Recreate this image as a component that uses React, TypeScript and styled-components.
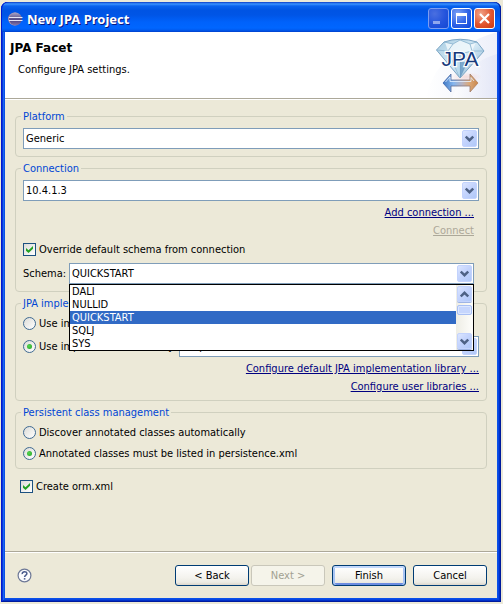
import React, { useId, useState } from "react";
import styled, { createGlobalStyle, css } from "styled-components";

const face = "#ece9d8";
const uiFont = '"DejaVu Sans Condensed", "Noto Sans", sans-serif';

const GlobalStyle = createGlobalStyle`
  *, *::before, *::after { box-sizing: border-box; }
  body {
    margin: 0;
    background: ${face};
    color: #000;
    font: 11px/13px ${uiFont};
  }
  button, select, input { font: inherit; color: inherit; margin: 0; }
`;

const Desktop = styled.div`
  display: flex;
  min-height: 100vh;
  padding: 2px 2px 2px 1px;
`;

const Dialog = styled.div`
  flex: 1;
  min-width: 0;
  display: flex;
  flex-direction: column;
  border-radius: 7px 7px 0 0;
  padding: 0 4px 4px;
  background: #0a50e8;
  box-shadow: inset 1px 0 #0019cf, inset -1px -1px #001a9c, inset 2px 0 #0a36da,
    inset -2px -2px #0030c8, inset 3px 0 #1c66f0, inset -3px -3px #0845e2;
`;

const TitleBar = styled.header`
  display: flex;
  align-items: center;
  gap: 4px;
  height: 30px;
  margin: 0 -4px;
  padding: 3px 6px 0 6px;
  border-radius: 7px 7px 0 0;
  background: linear-gradient(
    180deg, #0a3cc8 0, #3a93ff 2px, #0a62ee 4px, #0054e3 8px,
    #0055e6 13px, #0062fb 20px, #0066ff 26px, #005bf0 28px, #0040cc 30px
  );
  box-shadow: inset 1px 0 #0019cf, inset -1px 0 #001a9c;
`;

const Title = styled.h1`
  flex: 1;
  margin: 0;
  color: #fff;
  font: bold 13px/18px "Noto Sans", "Open Sans", sans-serif;
  text-shadow: 1px 1px #0a1883;
`;

const WindowButtons = styled.div`
  display: flex;
  gap: 2px;
`;

const WindowButton = styled.button<{ $kind: "min" | "max" | "close" }>`
  display: grid;
  place-items: center;
  width: 21px;
  height: 21px;
  padding: 0;
  border: 1px solid ${(p) => (p.$kind === "min" ? "#7d9df0" : "#fff")};
  border-radius: 3px;
  background: ${(p) =>
    p.$kind === "close"
      ? "radial-gradient(circle at 30% 25%, #f0a48a, #e2552f 55%, #c83a12)"
      : p.$kind === "max"
        ? "radial-gradient(circle at 30% 25%, #7ea2f6, #2f62e6 55%, #0f46d8)"
        : "radial-gradient(circle at 30% 25%, #4a6fe0, #2454dc 55%, #1248d4)"};
`;

const Banner = styled.section`
  display: flex;
  justify-content: space-between;
  height: 68px;
  background: #fff;
  border-bottom: 1px solid #fff;
  box-shadow: inset 0 -1px #aca899;
`;

const BannerText = styled.div`
  padding: 9px 0 0 5px;
`;

const BannerTitle = styled.h2`
  margin: 0;
  font: bold 12px/14px "DejaVu Sans", "Noto Sans", sans-serif;
`;

const BannerHint = styled.p`
  margin: 8px 0 0 8px;
`;

const Body = styled.main`
  flex: 1;
  display: flex;
  flex-direction: column;
  gap: 5px;
  padding: 10px;
  background: ${face};
`;

const Group = styled.fieldset<{ $flush?: boolean }>`
  min-width: 0;
  margin: 0;
  padding: ${(p) => (p.$flush ? 0 : 5)}px 7px 7px;
  border: 1px solid #d0d0bf;
  border-radius: 4px;
`;

const Legend = styled.legend`
  height: 13px;
  margin-left: -2px;
  padding: 0 2px;
  color: #0046d5;
`;

const ComboBox = styled.span`
  flex: 1;
  display: grid;
  align-items: center;
  min-width: 0;
  height: 21px;
  border: 1px solid #7f9db9;
  background: #fff;
`;

const ComboSelect = styled.select`
  grid-area: 1 / 1;
  appearance: none;
  width: 100%;
  height: 19px;
  padding: 0 20px 0 2px;
  border: 0;
  border-radius: 0;
  background: transparent;
  outline: 0;
`;

const arrowFace = css`
  display: grid;
  place-items: center;
  border: 1px solid #c3d3fd;
  border-radius: 2px;
  background: linear-gradient(135deg, #dbe5ff, #c4d4fd 45%, #b0c8f8);
`;

const ComboArrow = styled.span`
  ${arrowFace}
  grid-area: 1 / 1;
  justify-self: end;
  width: 15px;
  height: 17px;
  margin-right: 1px;
  pointer-events: none;
`;

const Links = styled.div<{ $inset?: boolean }>`
  display: flex;
  flex-direction: column;
  align-items: flex-end;
  gap: 5px;
  margin-top: 5px;
  padding-right: ${(p) => (p.$inset ? 5 : 0)}px;
`;

const Link = styled.a<{ $disabled?: boolean }>`
  color: ${(p) => (p.$disabled ? "#aca899" : "#000080")};
  text-decoration: underline;
  text-underline-offset: 1px;
`;

const Option = styled.label`
  display: flex;
  align-items: center;
  gap: 3px;
  white-space: nowrap;
`;

const CheckRow = styled.div<{ $outer?: boolean }>`
  display: flex;
  margin: ${(p) => (p.$outer ? "6px 0 0 5px" : "6px 0 7px")};
`;

const CheckInput = styled.input`
  appearance: none;
  flex: none;
  width: 13px;
  height: 13px;
  border: 1px solid #1c5180;
  background: linear-gradient(135deg, #dcdcd7, #fff);
  display: grid;
  place-items: center;
  &:checked::before {
    content: "";
    width: 7px;
    height: 7px;
    background: #21a121;
    clip-path: polygon(0 29%, 36% 62%, 100% 0, 100% 38%, 36% 100%, 0 67%);
  }
`;

const RadioInput = styled.input`
  appearance: none;
  flex: none;
  width: 13px;
  height: 13px;
  border: 1px solid #3f6a92;
  border-radius: 50%;
  background: linear-gradient(135deg, #dcdcd7, #fff);
  display: grid;
  place-items: center;
  &:checked::before {
    content: "";
    width: 5px;
    height: 5px;
    border-radius: 50%;
    background: radial-gradient(circle at 40% 40%, #55d551, #21a121);
  }
`;

const FieldRow = styled.div<{ $inset?: boolean }>`
  position: relative;
  display: flex;
  align-items: center;
  gap: 6px;
  padding-right: ${(p) => (p.$inset ? 5 : 0)}px;
`;

const FieldLabel = styled.label`
  flex: none;
  width: 40px;
  white-space: nowrap;
`;

const OptionRow = styled.div`
  display: flex;
  align-items: center;
  min-height: 26px;
`;

const LibraryOption = styled.div`
  flex: none;
  width: 150px;
`;

const RadioStack = styled.div`
  display: grid;
  grid-auto-rows: 16px;
  gap: 5px;
`;

const Popup = styled.div`
  position: absolute;
  z-index: 2;
  top: 100%;
  left: 46px;
  right: 5px;
  display: flex;
  border: 1px solid #000;
  background: #fff;
`;

const Items = styled.ul`
  flex: 1;
  margin: 0;
  padding: 0;
  list-style: none;
`;

const Item = styled.li<{ $selected: boolean }>`
  height: 13px;
  padding-left: 2px;
  cursor: default;
  line-height: 14px;
  ${(p) => p.$selected && "background: #316ac5; color: #fff;"}
`;

const ScrollTrack = styled.div`
  display: flex;
  flex-direction: column;
  width: 17px;
  padding: 1px;
  background: linear-gradient(90deg, #eeede5, #fefefb);
`;

const ScrollButton = styled.button`
  ${arrowFace}
  width: 15px;
  height: 16px;
  padding: 0;
  box-shadow: 0 1px #9fb5e4;
`;

const ScrollThumb = styled.div`
  flex: none;
  width: 15px;
  height: 10px;
  margin: 3px 0 auto;
  border: 1px solid #a9c0f4;
  border-radius: 2px;
  background: #c6d6fd;
  box-shadow: inset 0 0 0 1px #dce7ff;
`;

const Footer = styled.footer`
  display: flex;
  align-items: center;
  padding: 13px 10px 12px;
  border-top: 1px solid #aca899;
  box-shadow: inset 0 1px #fff;
  background: ${face};
`;

const HelpButton = styled.button`
  display: grid;
  margin: 0 auto 0 2px;
  padding: 0;
  border: 0;
  background: none;
`;

const PushButton = styled.button<{ $primary?: boolean; $spaced?: boolean }>`
  width: 74px;
  height: 21px;
  margin-left: ${(p) => (p.$spaced ? 7 : 2)}px;
  padding: 0;
  border: 1px solid #003c74;
  border-radius: 3px;
  background: linear-gradient(#fff, #f4f3ee 60%, #ecebe4 85%, #dcd6cb);
  ${(p) =>
    p.$primary &&
    "box-shadow: inset 0 2px #c2d8fc, inset 2px 0 #a8c4f3, inset -2px 0 #a8c4f3, inset 0 -2px #6c8ce0;"}
  &:disabled {
    border-color: #c9c7ba;
    background: #f5f4ea;
    color: #a1a192;
  }
`;

const Chevron = ({ up }: { up?: boolean }) => (
  <svg width="9" height="7" viewBox="0 0 9 7" aria-hidden="true">
    <path d={up ? "M.8 5.500 4.500 1.800 8.200 5.500" : "M.8 1.500 4.500 5.200 8.200 1.500"} fill="none" stroke="#4d6185" strokeWidth="2.400" />
  </svg>
);

const EclipseIcon = () => (
  <svg width="16" height="16" viewBox="0 0 16 16" aria-hidden="true">
    <defs>
      <linearGradient id="planet" x1="0" y1="0" x2="0" y2="1">
        <stop offset="0" stopColor="#a9a3c6" />
        <stop offset=".35" stopColor="#6f6798" />
        <stop offset=".6" stopColor="#4b4280" />
        <stop offset="1" stopColor="#857aac" />
      </linearGradient>
    </defs>
    <circle cx="7.500" cy="8" r="6.400" fill="#b796a8" />
    <circle cx="8.500" cy="8" r="6.400" fill="url(#planet)" />
    <path d="M2 6.500h13.500M2 9.500h13.500" stroke="#e4e4f6" />
  </svg>
);

const MinimizeGlyph = () => (
  <svg width="19" height="19" aria-hidden="true"><path d="M4 12h7v3H4z" fill="#8fa8ee" /></svg>
);

const MaximizeGlyph = () => (
  <svg width="19" height="19" aria-hidden="true">
    <path d="M4 4h11v11H4zM5 7v7h9V7z" fill="#fff" fillRule="evenodd" />
  </svg>
);

const CloseGlyph = () => (
  <svg width="19" height="19" aria-hidden="true">
    <path d="m5 5 9 9M14 5l-9 9" stroke="#fff" strokeWidth="2.200" />
  </svg>
);

const HelpGlyph = () => (
  <svg width="15" height="15" viewBox="0 0 15 15" aria-hidden="true">
    <circle cx="7.500" cy="7.500" r="6.400" fill="#fbfbfd" stroke="#6d7896" strokeWidth="1.200" />
    <path d="M5.200 6.100C5 3 10 3 9.900 5.700 9.800 7.200 7.600 7 7.600 9" fill="none" stroke="#4a5a8c" strokeWidth="1.500" />
    <path d="M6.800 10.100h1.600v1.500H6.800z" fill="#4a5a8c" />
  </svg>
);

const JpaLogo = () => (
  <svg width="73" height="66" viewBox="0 0 73 66" role="img" aria-label="JPA">
    <defs>
      <linearGradient id="haze" x1="0" y1="0" x2="1" y2="0">
        <stop offset="0" stopColor="#fff" />
        <stop offset="1" stopColor="#dfe3f5" />
      </linearGradient>
      <linearGradient id="gem" x1="0" y1="0" x2="1" y2="1">
        <stop offset="0" stopColor="#a9cde2" />
        <stop offset=".5" stopColor="#d3e8f4" />
        <stop offset="1" stopColor="#7fadd0" />
      </linearGradient>
      <linearGradient id="arrow" gradientUnits="userSpaceOnUse" x1="19" y1="0" x2="54" y2="0">
        <stop offset="0" stopColor="#3f78c4" />
        <stop offset=".3" stopColor="#86b6ee" />
        <stop offset=".55" stopColor="#b9b3c0" />
        <stop offset=".75" stopColor="#dba878" />
        <stop offset="1" stopColor="#c9874c" />
      </linearGradient>
      <linearGradient id="arrowEdge" gradientUnits="userSpaceOnUse" x1="19" y1="0" x2="54" y2="0">
        <stop offset="0" stopColor="#3763ae" />
        <stop offset="1" stopColor="#b98258" />
      </linearGradient>
      <radialGradient id="glow">
        <stop offset="0" stopColor="#f3c9c4" stopOpacity=".6" />
        <stop offset="1" stopColor="#f3c9c4" stopOpacity="0" />
      </radialGradient>
    </defs>
    <path d="M73 0C48 7 30 20 17 34 8 44 5 56 1 66h72z" fill="url(#haze)" opacity=".55" />
    <path d="M73 22C55 27 40 38 28 66h45z" fill="url(#haze)" opacity=".7" />
    <ellipse cx="42" cy="45" rx="16" ry="5" fill="url(#glow)" />
    <path d="M12.500 18 20 10Q36 4.500 53 10l7 9-24 27z" fill="url(#gem)" stroke="#7ba5c4" />
    <path d="m21 10.500 8 1.500 7-4 10 4 6-1.500-4 8.500-12 3-12-3z" fill="#f1f8fc" opacity=".85" />
    <path d="m12.500 18 11.500 1 5-7-9-2M60 19l-12 0-2-7 7-2M24 19l12 3 12-3M24 19l12 27 12-27M29 12l7-4 10 4M36 22v24" fill="none" stroke="#86b1ce" strokeWidth=".8" />
    <path d="m36 46V30l7 0z" fill="#4f86b8" opacity=".6" />
    <path d="m36 46V30l-7 0z" fill="#b9dcee" opacity=".7" />
    <text
      x="36" y="34" textAnchor="middle" fontFamily="Liberation Sans, sans-serif" fontSize="21"
      fill="#17397c" stroke="#fff" strokeWidth="2.400" paintOrder="stroke"
    >JPA</text>
    <path d="m19 51 8-9v6h19v-6l8 9-8 9v-6H27v6z" fill="url(#arrow)" stroke="url(#arrowEdge)" strokeWidth=".8" />
    <path d="M21.500 50 26 45v4.500H47v-4l3 3.500" fill="none" stroke="#e6f1ff" opacity=".8" />
  </svg>
);

function Combo({ id, label, options }: { id?: string; label?: string; options: string[] }) {
  return (
    <ComboBox>
      <ComboSelect id={id} aria-label={label}>
        {options.map((o) => <option key={o}>{o}</option>)}
      </ComboSelect>
      <ComboArrow><Chevron /></ComboArrow>
    </ComboBox>
  );
}

function Check({ children }: { children: React.ReactNode }) {
  const id = useId();
  return (
    <Option htmlFor={id}>
      <CheckInput id={id} type="checkbox" defaultChecked />
      {children}
    </Option>
  );
}

function Radio({ name, checked, children }: { name: string; checked?: boolean; children: React.ReactNode }) {
  const id = useId();
  return (
    <Option htmlFor={id}>
      <RadioInput id={id} type="radio" name={name} defaultChecked={checked} />
      {children}
    </Option>
  );
}

const schemas = ["DALI", "NULLID", "QUICKSTART", "SQLJ", "SYS"];

function SchemaField() {
  const [schema, setSchema] = useState("QUICKSTART");
  return (
    <FieldRow $inset>
      <FieldLabel htmlFor="schema">Schema:</FieldLabel>
      <ComboBox>
        <ComboSelect id="schema" value={schema} onChange={(e) => setSchema(e.target.value)}>
          {schemas.map((s) => <option key={s}>{s}</option>)}
        </ComboSelect>
        <ComboArrow><Chevron /></ComboArrow>
      </ComboBox>
      <Popup>
        <Items role="listbox" aria-label="Schema">
          {schemas.map((s) => (
            <Item key={s} role="option" aria-selected={s === schema} $selected={s === schema} onClick={() => setSchema(s)}>
              {s}
            </Item>
          ))}
        </Items>
        <ScrollTrack>
          <ScrollButton type="button" aria-label="Scroll up"><Chevron up /></ScrollButton>
          <ScrollThumb />
          <ScrollButton type="button" aria-label="Scroll down"><Chevron /></ScrollButton>
        </ScrollTrack>
      </Popup>
    </FieldRow>
  );
}

export default function App() {
  return (
    <Desktop>
      <GlobalStyle />
      <Dialog role="dialog" aria-labelledby="dialog-title">
        <TitleBar>
          <EclipseIcon />
          <Title id="dialog-title">New JPA Project</Title>
          <WindowButtons>
            <WindowButton $kind="min" aria-label="Minimize"><MinimizeGlyph /></WindowButton>
            <WindowButton $kind="max" aria-label="Maximize"><MaximizeGlyph /></WindowButton>
            <WindowButton $kind="close" aria-label="Close"><CloseGlyph /></WindowButton>
          </WindowButtons>
        </TitleBar>
        <Banner>
          <BannerText>
            <BannerTitle>JPA Facet</BannerTitle>
            <BannerHint>Configure JPA settings.</BannerHint>
          </BannerText>
          <JpaLogo />
        </Banner>
        <Body>
          <Group>
            <Legend>Platform</Legend>
            <FieldRow><Combo label="Platform" options={["Generic"]} /></FieldRow>
          </Group>
          <Group>
            <Legend>Connection</Legend>
            <FieldRow><Combo label="Connection" options={["10.4.1.3"]} /></FieldRow>
            <Links $inset>
              <Link href="#add-connection">Add connection ...</Link>
              <Link href="#connect" aria-disabled="true" $disabled>Connect</Link>
            </Links>
            <CheckRow><Check>Override default schema from connection</Check></CheckRow>
            <SchemaField />
          </Group>
          <Group $flush>
            <Legend>JPA implementation</Legend>
            <OptionRow>
              <Radio name="implementation">Use implementation provided by the server runtime</Radio>
            </OptionRow>
            <FieldRow>
              <LibraryOption>
                <Radio name="implementation" checked>Use implementation library:</Radio>
              </LibraryOption>
              <Combo label="Implementation library" options={["EclipseLink"]} />
            </FieldRow>
            <Links>
              <Link href="#default-library">Configure default JPA implementation library ...</Link>
              <Link href="#user-libraries">Configure user libraries ...</Link>
            </Links>
          </Group>
          <Group>
            <Legend>Persistent class management</Legend>
            <RadioStack>
              <Radio name="classes">Discover annotated classes automatically</Radio>
              <Radio name="classes" checked>Annotated classes must be listed in persistence.xml</Radio>
            </RadioStack>
          </Group>
          <CheckRow $outer><Check>Create orm.xml</Check></CheckRow>
        </Body>
        <Footer>
          <HelpButton type="button" aria-label="Help"><HelpGlyph /></HelpButton>
          <PushButton type="button">&lt; Back</PushButton>
          <PushButton type="button" disabled>Next &gt;</PushButton>
          <PushButton type="button" $primary $spaced>Finish</PushButton>
          <PushButton type="button" $spaced>Cancel</PushButton>
        </Footer>
      </Dialog>
    </Desktop>
  );
}
